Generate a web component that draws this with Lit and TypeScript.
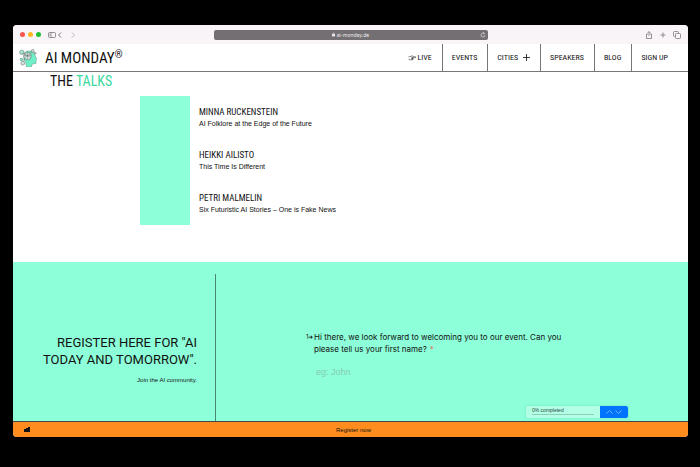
import { LitElement, html, css, svg } from "lit";
import { customElement } from "lit/decorators.js";

const talks = [
  { speaker: "MINNA RUCKENSTEIN", title: "AI Folklore at the Edge of the Future" },
  { speaker: "HEIKKI AILISTO", title: "This Time Is Different" },
  { speaker: "PETRI MALMELIN", title: "Six Futuristic AI Stories – One is Fake News" },
];

const pointer = html`<svg class="pointer" viewBox="0 0 16 12" aria-hidden="true">
  <path d="M1 3.500h3l3-1.500h3l1 1.500h4v2H9M6 5.500h4v2H7M7 7.500h3v2H4l-3-1" />
</svg>`;

const plus = html`<svg class="plus" viewBox="0 0 7 7" aria-hidden="true">
  <path stroke-width=".8" d="M3.500 0v7M0 3.500h7" />
</svg>`;

const brain = svg`
  <path fill="#6ff0c8" stroke="#5b6f69" stroke-width=".4" d="M7 3c3-2 9-1 10 4l2 4-1 1v3c-1 1-3 0-4 1l-1 3H8l-1-5-2-3c0-3 0-6 2-8z" />
  <g fill="#d5e6e1" stroke="#4c5f59" stroke-width=".5">
    <circle cx="9" cy="7.500" r="4" />
    <circle cx="3" cy="3.500" r="2.300" fill="#a9ead4" />
    <circle cx="14.500" cy="2" r="1.500" />
    <circle cx="17" cy="4.500" r="1" />
    <circle cx="4" cy="15" r="2" />
    <circle cx="2.500" cy="11" r="1.300" fill="#6ff0c8" />
  </g>
  <path fill="none" stroke="#4c5f59" stroke-width=".4" d="M6 5l6 4M6 9l6-4M9 3v8M5 7h8M3 4l4 2M4 13l3-3M11 5l3-2" />
`;

@customElement("app-root")
export class AppRoot extends LitElement {
  static styles = css`
    :host {
      display: block;
      box-sizing: border-box;
      min-height: 100vh;
      padding: 25px 12px 30px 13px;
      background: #000;
      color: #111;
      font: 7px/10px "Liberation Sans", Arial, sans-serif;
    }
    * { box-sizing: border-box; }
    h1, h2, h3, p, ul { margin: 0; padding: 0; font-weight: 400; }
    button { border: 0; margin: 0; padding: 0; background: none; color: inherit; font: inherit; display: flex; }
    a { color: inherit; text-decoration: none; }
    svg { display: block; fill: none; stroke: currentColor; }
    .window {
      display: flex;
      flex-direction: column;
      min-height: calc(100vh - 55px);
      border-radius: 4px;
      overflow: hidden;
      background: #fff;
    }
    .toolbar {
      display: grid;
      grid-template-columns: 1fr 274px 1fr;
      align-items: center;
      height: 19px;
      padding: 0 7px;
      background: #f9f4f8;
      color: #7b777b;
    }
    .group { display: flex; align-items: center; }
    .dots { display: flex; gap: 3px; margin-right: 7px; }
    .dot { width: 5px; height: 5px; border-radius: 50%; }
    .red { background: #fc544d; }
    .amber { background: #fdb924; }
    .green { background: #22c036; }
    .tool { width: 8px; height: 8px; }
    .history { display: flex; gap: 5px; }
    .faint { color: #bdb9bd; }
    .actions { justify-content: flex-end; gap: 6px; }
    .address {
      display: grid;
      grid-template-columns: 1fr auto 1fr;
      align-items: center;
      height: 10px;
      padding: 0 2px;
      border-radius: 2px;
      background: #746f73;
      color: #eee;
    }
    .url { display: flex; align-items: center; gap: 2px; grid-column: 2; font: 5px/8px Inter, sans-serif; }
    .lock { width: 3px; height: 5px; fill: currentColor; }
    .reload { width: 6px; height: 6px; justify-self: end; }
    .header {
      display: flex;
      justify-content: space-between;
      height: 28px;
      border-bottom: 1px solid #777;
    }
    .brand { display: flex; align-items: center; gap: 8px; padding-left: 6px; }
    .logo { width: 18px; height: 18px; }
    .wordmark, .heading, .speaker, .nav { font-family: "Roboto Condensed", "Liberation Sans Narrow", Roboto, sans-serif; }
    .wordmark { display: flex; font-size: 15px; line-height: 20px; }
    .registered { font-size: 10px; line-height: 14px; }
    .nav { display: flex; font-size: 8px; }
    .link { display: flex; align-items: center; gap: 5px; padding: 0 10px 0 9px; border-left: 1px solid #777; }
    .link:first-child { border-left: 0; gap: 2px; }
    .link:last-child { padding-right: 20px; }
    .pointer { width: 8px; height: 6px; }
    .plus { width: 7px; height: 7px; }
    .talks { flex: 1; padding: 0 37px 37px; }
    .heading { font-size: 14px; line-height: 18px; padding-bottom: 6px; }
    .accent { color: #3bd99f; }
    .program { display: flex; gap: 9px; margin-left: 90px; }
    .portrait { width: 50px; background: #8dffd9; }
    .list { list-style: none; }
    .talk { height: 43px; padding-top: 9px; }
    .speaker { font-size: 9px; line-height: 14px; }
    .title { line-height: 10px; }
    .register {
      position: relative;
      display: grid;
      grid-template-columns: 203px 1fr;
      min-height: 160px;
      padding-top: 12px;
      background: #8dffd9;
      border-bottom: 1px solid #444;
    }
    .pitch { padding: 60px 18px 0 20px; border-right: 1px solid #4a8573; text-align: right; }
    .pitch-title { font: 13px/17px Roboto, sans-serif; }
    .pitch-note { margin-top: 7px; font-size: 6px; line-height: 10px; }
    .form { padding: 57px 100px 0 90px; }
    .question { display: flex; font: 8px/12px Inter, sans-serif; }
    .number { font-size: 6px; width: 8px; flex: none; white-space: nowrap; }
    .required { margin-left: 3px; color: #e5705f; }
    .answer { display: block; width: 100%; margin: 10px 0 0; padding: 0 0 0 10px; border: 0; outline: 0; background: none; font: 9px/14px "Liberation Sans", sans-serif; }
    .answer::placeholder { color: #84ccb3; opacity: 1; }
    .progress {
      position: absolute;
      right: 60px;
      bottom: 3px;
      display: flex;
      height: 12px;
      width: 102px;
      border-radius: 2px;
      overflow: hidden;
      background: #b2ffe5;
      box-shadow: 0 0 2px #6fd3b1;
    }
    .status { flex: 1; padding: 1px 6px 0; font-size: 5px; line-height: 7px; color: #2c4a40; }
    .track { height: 1px; background: #8fcfb9; }
    .steps { display: flex; align-items: center; justify-content: center; gap: 2px; width: 28px; background: #0074ff; color: #8cc2ff; }
    .step { width: 7px; height: 4px; }
    .footer {
      display: grid;
      grid-template-columns: 1fr auto 1fr;
      align-items: center;
      height: 15px;
      padding: 0 5px 0 11px;
      background: #ff8c1f;
      font-size: 6px;
    }
    .mark { width: 6px; height: 5px; fill: #111; stroke: none; }
  `;

  render() {
    return html`
      <div class="window">
        <div class="toolbar">
          <div class="group">
            <div class="dots"><span class="dot red"></span><span class="dot amber"></span><span class="dot green"></span></div>
            <button aria-label="Sidebar"><svg class="tool" viewBox="0 0 8 8"><rect x=".5" y="1.500" width="7" height="5" rx="1" stroke-width=".8" /><path d="M3 1.500v5M1.500 3h.7M1.500 4.500h.7" stroke-width=".8" /></svg></button>
            <div class="history">
              <button aria-label="Back"><svg class="tool" viewBox="0 0 8 8"><path d="M5 1.500L2.500 4 5 6.500" /></svg></button>
              <button class="faint" aria-label="Forward"><svg class="tool" viewBox="0 0 8 8"><path d="M3 1.500L5.500 4 3 6.500" /></svg></button>
            </div>
          </div>
          <div class="address">
            <span class="url"><svg class="lock" viewBox="0 0 4 6"><rect y="2.500" width="4" height="3" stroke="none" /><path fill="none" stroke-width=".8" d="M1 3V1.500q1-1 2 0V3" /></svg>ai-monday.de</span>
            <button class="reload" aria-label="Reload"><svg class="reload" viewBox="0 0 6 6"><path stroke-width=".6" d="M5 3a2 2 0 1 1-1-1.700M3 .5l1.500.8L3.500 2.500" /></svg></button>
          </div>
          <div class="group actions">
            <button aria-label="Share"><svg class="tool" viewBox="0 0 8 8"><path stroke-width=".8" d="M3 3H1.500v4.500h5V3H5M4 5V.7M2.800 1.800L4 .6l1.200 1.200" /></svg></button>
            <button aria-label="New tab"><svg class="tool" viewBox="0 0 8 8"><path stroke-width=".8" d="M4 1.500v5M1.500 4h5" /></svg></button>
            <button aria-label="Tabs"><svg class="tool" viewBox="0 0 8 8"><rect x="2.500" y="2.500" width="5" height="5" rx="1" stroke-width=".8" /><path stroke-width=".8" d="M2 5.500H1.500q-1 0-1-1v-3q0-1 1-1h3q1 0 1 1V2" /></svg></button>
          </div>
        </div>
        <header class="header">
          <a class="brand" href="#">
            <svg class="logo" viewBox="0 0 19 19" aria-hidden="true">${brain}</svg>
            <h1 class="wordmark">AI MONDAY<span class="registered">®</span></h1>
          </a>
          <nav class="nav">
            <a class="link" href="#live">${pointer}LIVE</a>
            <a class="link" href="#events">EVENTS</a>
            <a class="link" href="#cities">CITIES${plus}</a>
            <a class="link" href="#speakers">SPEAKERS</a>
            <a class="link" href="#blog">BLOG</a>
            <a class="link" href="#signup">SIGN UP</a>
          </nav>
        </header>
        <section class="talks">
          <h2 class="heading">THE <span class="accent">TALKS</span></h2>
          <div class="program">
            <div class="portrait"></div>
            <ul class="list">
              ${talks.map((t) => html`<li class="talk"><h3 class="speaker">${t.speaker}</h3><p class="title">${t.title}</p></li>`)}
            </ul>
          </div>
        </section>
        <section class="register">
          <div class="pitch">
            <h2 class="pitch-title">REGISTER HERE FOR "AI TODAY AND TOMORROW".</h2>
            <p class="pitch-note">Join the AI community.</p>
          </div>
          <form class="form">
            <label class="question" for="first-name"><span class="number">1➜</span><span>Hi there, we look forward to welcoming you to our event. Can you please tell us your first name?<span class="required">*</span></span></label>
            <input class="answer" id="first-name" placeholder="eg: John" />
          </form>
          <div class="progress">
            <div class="status">0% completed<div class="track"></div></div>
            <div class="steps">
              <button aria-label="Previous"><svg class="step" viewBox="0 0 7 4"><path stroke-width=".8" d="M.5 3.500l3-3 3 3" /></svg></button>
              <button aria-label="Next"><svg class="step" viewBox="0 0 7 4"><path stroke-width=".8" d="M.5.5l3 3 3-3" /></svg></button>
            </div>
          </div>
        </section>
        <footer class="footer">
          <svg class="mark" viewBox="0 0 6 5" aria-hidden="true"><path d="M0 2h2V1h2V0h2v5H0z" /></svg>
          <a href="#register">Register now</a>
        </footer>
      </div>
    `;
  }
}
